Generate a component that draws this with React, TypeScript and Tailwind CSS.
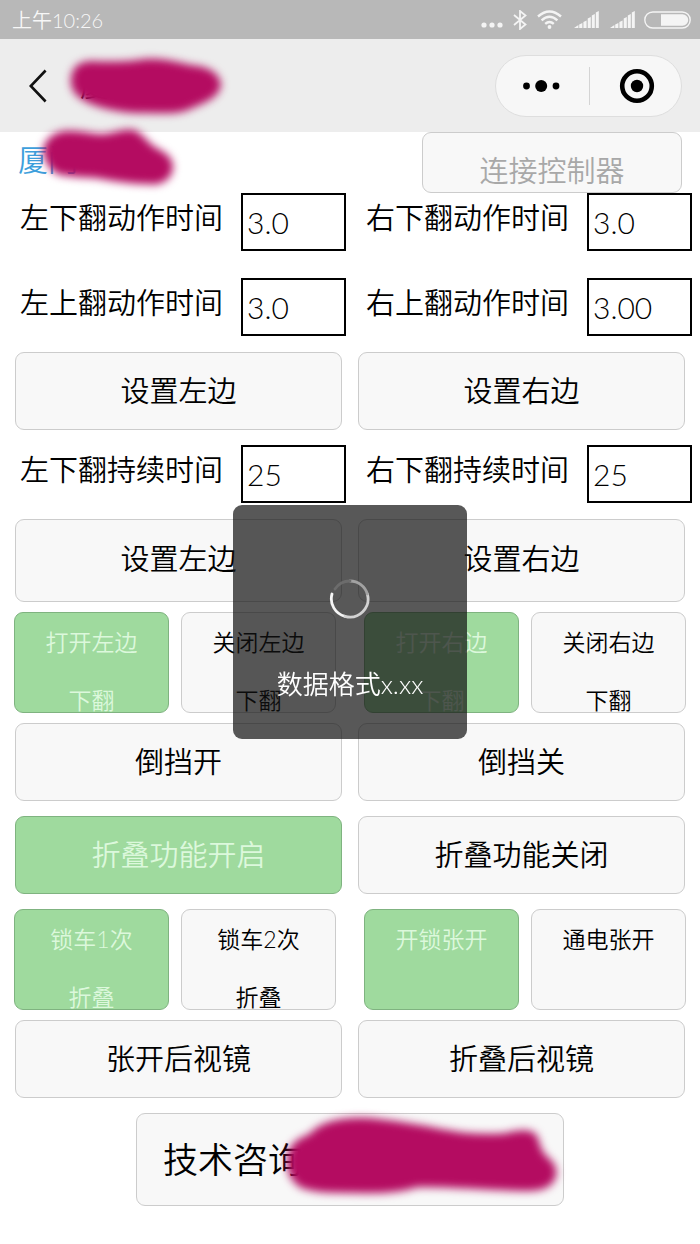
import type { FC, ReactNode } from "react";
import React from "react";
import { clsx } from "clsx";

type TFieldProps = {
  id: string;
  label: string;
  value: string;
};

type TButtonProps = {
  children: ReactNode;
  active?: boolean;
  className?: string;
};

const Field: FC<TFieldProps> = (props) => {
  const { id, label, value } = props;

  return (
    <div className="flex items-start justify-between pl-5">
      <label htmlFor={id} className="text-[29px] leading-[50px] whitespace-nowrap">
        {label}
      </label>
      <input
        id={id}
        type="text"
        defaultValue={value}
        className="h-[58px] w-[105px] border-2 border-black bg-white px-1 text-[30px] outline-none"
      />
    </div>
  );
};

const FieldRow: FC<{ children: ReactNode; className?: string }> = ({ children, className }) => (
  <div className={clsx("grid grid-cols-2 pr-2", className)}>{children}</div>
);

const Button: FC<TButtonProps> = (props) => {
  const { children, active = false, className } = props;

  return (
    <button
      type="button"
      className={clsx(
        "rounded-[9px] border text-[29px]",
        active ? "border-[#7fb380] bg-[#9fda9e] text-[#dcf8dc]" : "border-[#cccccc] bg-[#f8f8f8] text-black",
        className
      )}
    >
      {children}
    </button>
  );
};

const ButtonRow: FC<{ children: ReactNode; className?: string }> = ({ children, className }) => (
  <div className={clsx("grid grid-cols-2 gap-4 px-[15px]", className)}>{children}</div>
);

// two line button, the second line touches the bottom edge
const SmallButton: FC<{ lines: string[]; active?: boolean }> = ({ lines, active }) => (
  <Button active={active} className="flex h-[101px] flex-col items-center gap-[34px] pt-[17px]">
    {lines.map((line) => (
      <span key={line} className="text-[23px] leading-[24px]">
        {line}
      </span>
    ))}
  </Button>
);

const SmallButtonPair: FC<{ children: ReactNode }> = ({ children }) => (
  <div className="grid grid-cols-2 gap-3 px-[14px]">{children}</div>
);

const SignalIcon = () => (
  <svg width="25" height="17" viewBox="0 0 25 17" fill="#f4f4f4">
    <path d="M0 17L4.4 14V17ZM5.2 13.5L8.4 12V17H5.2ZM9.4 11L12.6 9.4V17H9.4ZM13.7 7.5L16.8 6V17H13.7ZM17.8 4.5L20.8 3V17H17.8ZM21.8 1.5L24.8 0V17H21.8Z" />
  </svg>
);

const StatusBar = () => (
  <div className="flex h-[39px] items-center justify-between bg-[#b8b8b8] pr-[9px] pl-3 text-xl text-[#f7f7f7]">
    <span>上午10:26</span>
    <div className="flex items-center">
      <svg width="22" height="20" viewBox="0 0 22 20" fill="#f4f4f4" className="mr-[10px]">
        <circle cx="3" cy="15" r="2.6" />
        <circle cx="11" cy="15" r="2.6" />
        <circle cx="19" cy="15" r="2.6" />
      </svg>
      <svg width="14" height="20" viewBox="0 0 14 20" fill="none" stroke="#f4f4f4" strokeWidth="1.8" className="mr-[10px]">
        <path d="M1 5L12.5 14.5L7 19V1L12.5 5.5L1 15" />
      </svg>
      <svg width="25" height="19" viewBox="0 0 25 19" fill="none" stroke="#f4f4f4" strokeWidth="2.4" className="mr-3">
        <path d="M1 6.5Q12.5 -3.7 24 6.5" />
        <path d="M4.6 10.3Q12.5 3.2 20.4 10.3" />
        <path d="M8.2 13.8Q12.5 10 16.8 13.8" />
        <circle cx="12.5" cy="17" r="1.9" fill="#f4f4f4" stroke="none" />
      </svg>
      <div className="mr-[9px] flex gap-[11px]">
        <SignalIcon />
        <SignalIcon />
      </div>
      <svg width="47" height="18" viewBox="0 0 47 18">
        <rect x="0.8" y="1" width="45.4" height="16" rx="8" fill="none" stroke="#f4f4f4" strokeWidth="1.4" />
        <path d="M17 3.3H38.5A5.7 5.7 0 0 1 38.5 14.7H17Z" fill="#f4f4f4" />
      </svg>
    </div>
  </div>
);

const NavBar = () => (
  <header className="relative flex h-[93px] items-center justify-between bg-[#ededed] pr-[18px] pl-7">
    <div className="flex items-center gap-8">
      <button type="button" aria-label="返回">
        <svg width="20" height="34" viewBox="0 0 20 34" fill="none" stroke="#111" strokeWidth="2.6">
          <path d="M17.6 1.5L2.8 17L17.6 32.5" />
        </svg>
      </button>
      <h1 className="text-[29px]">厦门</h1>
    </div>
    <div className="flex h-[62px] w-[187px] items-center rounded-full border border-[#dedede] bg-[#f7f7f7]">
      <button type="button" aria-label="更多" className="flex w-1/2 justify-center">
        <svg width="38" height="14" viewBox="0 0 38 14">
          <circle cx="3.5" cy="7" r="3.4" />
          <circle cx="18.2" cy="7" r="6" />
          <circle cx="33" cy="7" r="3.4" />
        </svg>
      </button>
      <button
        type="button"
        aria-label="关闭"
        className="flex h-[38px] w-1/2 items-center justify-center border-l border-[#d4d4d4] pl-1"
      >
        <svg width="36" height="36" viewBox="0 0 36 36">
          <circle cx="18" cy="18" r="14.8" fill="none" stroke="#000" strokeWidth="4.6" />
          <circle cx="18" cy="18" r="6.2" />
        </svg>
      </button>
    </div>
    <svg
      className="pointer-events-none absolute top-3 left-[60px] overflow-visible blur-[4px]"
      width="175"
      height="75"
      viewBox="60 51 175 75"
      fill="#b40c61"
      stroke="#b40c61"
      strokeWidth="2"
    >
      <path d="M72 84C71 70 78 63 90 62C110 63 122 63 138 61C155 58 170 61 190 66C205 67 218 71 220 85C218 97 204 102 192 107C180 114 165 112 145 112C120 112 100 107 87 101C78 97 73 92 72 84Z" />
    </svg>
  </header>
);

const Toast = () => (
  <div className="pointer-events-none fixed inset-0 flex items-center justify-center">
    <div
      role="status"
      className="flex h-[234px] w-[234px] flex-col items-center rounded-[9px] bg-[#111111]/70 pt-[73px] text-white"
    >
      <svg width="42" height="42" viewBox="0 0 42 42" fill="none" strokeWidth="2.8" strokeLinecap="round">
        <path d="M3 16A18 18 0 0 0 16 38.3" stroke="#f5f5f5" />
        <path d="M16 38.3A18 18 0 0 0 38.3 16" stroke="#d2d2d2" />
        <path d="M38.3 16A18 18 0 0 0 21 3" stroke="#a2a2a2" />
        <path d="M21 3A18 18 0 0 0 6 11" stroke="#6c6c6c" />
      </svg>
      <p className="mt-11 text-[26px] leading-[40px] whitespace-nowrap">数据格式x.xx</p>
    </div>
  </div>
);

export default function App() {
  return (
    <div className="min-h-screen bg-white font-['Lato','Noto_Sans_CJK_SC',sans-serif] font-[350] text-black">
      <StatusBar />
      <NavBar />
      <main className="pb-8">
        <div className="relative flex h-[61px] items-start justify-between pr-[18px] pl-[18px]">
          <a href="#device" className="text-[30px] leading-[54px] text-[#3d9fdc]">
            厦门
          </a>
          <button
            type="button"
            disabled
            className="h-[61px] w-[260px] rounded-[9px] border border-[#cccccc] bg-[#f8f8f8] pt-4 text-[29px] text-[#a8a8a8]"
          >
            连接控制器
          </button>
          <svg
            className="pointer-events-none absolute -top-3 left-[30px] overflow-visible blur-[4px]"
            width="155"
            height="75"
            viewBox="30 120 155 75"
            fill="#b40c61"
            stroke="#b40c61"
            strokeWidth="2"
          >
            <path d="M44 150C46 140 54 134 64 132C80 130 92 136 105 135C118 133 126 129 134 131C144 136 146 143 156 149C168 155 172 160 172 168C170 180 160 185 148 183C128 183 112 180 96 177C80 176 68 176 58 173C50 169 45 160 44 150Z" />
          </svg>
        </div>

        <FieldRow>
          <Field id="left-down-action" label="左下翻动作时间" value="3.0" />
          <Field id="right-down-action" label="右下翻动作时间" value="3.0" />
        </FieldRow>
        <FieldRow className="mt-[27px]">
          <Field id="left-up-action" label="左上翻动作时间" value="3.0" />
          <Field id="right-up-action" label="右上翻动作时间" value="3.00" />
        </FieldRow>
        <ButtonRow className="mt-4">
          <Button className="h-[78px]">设置左边</Button>
          <Button className="h-[78px]">设置右边</Button>
        </ButtonRow>

        <FieldRow className="mt-[15px]">
          <Field id="left-down-hold" label="左下翻持续时间" value="25" />
          <Field id="right-down-hold" label="右下翻持续时间" value="25" />
        </FieldRow>
        <ButtonRow className="mt-4">
          <Button className="h-[83px] pb-1">设置左边</Button>
          <Button className="h-[83px] pb-1">设置右边</Button>
        </ButtonRow>

        <div className="my-[10px] grid grid-cols-2">
          <SmallButtonPair>
            <SmallButton active lines={["打开左边", "下翻"]} />
            <SmallButton lines={["关闭左边", "下翻"]} />
          </SmallButtonPair>
          <SmallButtonPair>
            <SmallButton active lines={["打开右边", "下翻"]} />
            <SmallButton lines={["关闭右边", "下翻"]} />
          </SmallButtonPair>
        </div>

        <ButtonRow>
          <Button className="h-[78px]">倒挡开</Button>
          <Button className="h-[78px]">倒挡关</Button>
        </ButtonRow>
        <ButtonRow className="mt-[15px]">
          <Button active className="h-[78px]">
            折叠功能开启
          </Button>
          <Button className="h-[78px]">折叠功能关闭</Button>
        </ButtonRow>

        <div className="mt-[15px] mb-[10px] grid grid-cols-2">
          <SmallButtonPair>
            <SmallButton active lines={["锁车1次", "折叠"]} />
            <SmallButton lines={["锁车2次", "折叠"]} />
          </SmallButtonPair>
          <SmallButtonPair>
            <SmallButton active lines={["开锁张开"]} />
            <SmallButton lines={["通电张开"]} />
          </SmallButtonPair>
        </div>

        <ButtonRow>
          <Button className="h-[78px]">张开后视镜</Button>
          <Button className="h-[78px]">折叠后视镜</Button>
        </ButtonRow>

        <div className="relative mx-auto mt-[15px] w-[428px]">
          <button
            type="button"
            className="h-[93px] w-full rounded-[9px] border border-[#cccccc] bg-[#f8f8f8] pl-[26px] text-left text-[35px]"
          >
            技术咨询
          </button>
          <svg
            className="pointer-events-none absolute -top-1 left-[138px] overflow-visible blur-[4px]"
            width="295"
            height="95"
            viewBox="274 1109 295 95"
            fill="#b40c61"
            stroke="#b40c61"
            strokeWidth="2"
          >
            <path d="M288 1161C288 1146 297 1140 310 1135C320 1123 336 1120 352 1119C375 1118 395 1122 420 1126C450 1132 475 1137 506 1134C518 1131 530 1129 536 1136C539 1143 539 1150 545 1156C553 1162 557 1168 555 1176C552 1187 540 1190 528 1190C495 1190 455 1186 418 1186C400 1192 380 1193 355 1192C335 1191 318 1193 302 1187C291 1181 288 1172 288 1161Z" />
          </svg>
        </div>
      </main>
      <Toast />
    </div>
  );
}
